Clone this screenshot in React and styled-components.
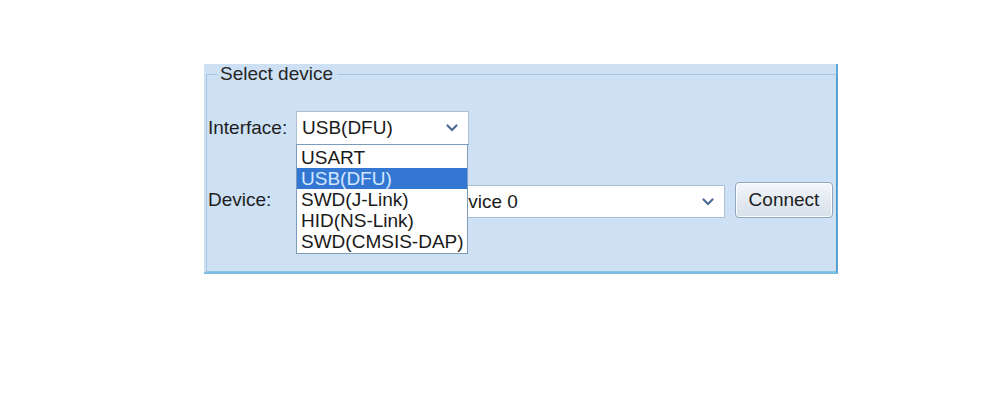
import React from "react";
import styled, { createGlobalStyle } from "styled-components";

const Global = createGlobalStyle`
    html, body {
        margin: 0;
        padding: 0;
        background: #ffffff;
    }
    body {
        font-family: "Liberation Sans", Arial, sans-serif;
        color: #1f1f1f;
    }
`;

const Page = styled.div`
    width: 1000px;
    height: 416px;
    padding: 64px 0 0 204px;
    box-sizing: border-box;
`;

const Panel = styled.div`
    width: 634px;
    height: 210px;
    box-sizing: border-box;
    background: #cde0f4;
    border-right: 2px solid #62a9da;
    border-bottom: 2px solid #7cbde6;
    padding: 0 1px 0 2px;
`;

const Group = styled.fieldset`
    margin: 0;
    height: 100%;
    box-sizing: border-box;
    border: 1px solid #a6c6e2;
    border-right-color: #4f98cc;
    border-bottom-color: #8fc3e6;
    padding: 27px 3px 0 1px;
    display: flex;
    flex-direction: column;
    gap: 37px;
`;

const Legend = styled.legend`
    margin-left: 9px;
    padding: 0 4px 0 3px;
    font-size: 19px;
    line-height: 20px;
    color: #262626;
`;

const Row = styled.div`
    display: flex;
    align-items: ${p => p.$align || "center"};
    height: ${p => p.$h}px;
`;

const Label = styled.div`
    width: 88px;
    align-self: center;
    font-size: 19px;
    color: #1e1e1e;
    flex-shrink: 0;
`;

const Combo = styled.div`
    position: relative;
    width: ${p => p.$w}px;
    height: ${p => p.$h}px;
    box-sizing: border-box;
    background: #ffffff;
    border: 1px solid #adbfd2;
    border-bottom-color: ${p => (p.$open ? "#3c7fb8" : "#adbfd2")};
    display: flex;
    align-items: center;
    justify-content: space-between;
    padding: 0 10px 0 ${p => p.$pad || 5}px;
    font-size: 19px;
    color: #1a1a1a;
`;

const Chevron = () => (
    <svg width="12" height="8" viewBox="0 0 12 8">
        <path d="M1.5 1.5 L6 6 L10.5 1.5" fill="none" stroke="#4d6c98" strokeWidth="2.2" strokeLinecap="round" />
    </svg>
);

const List = styled.ul`
    position: absolute;
    left: -1px;
    top: 100%;
    width: 172px;
    box-sizing: border-box;
    margin: 0;
    padding: 2px 0 1px;
    list-style: none;
    background: #ffffff;
    border: 1px solid #7d9cbd;
    z-index: 5;
`;

const Item = styled.li`
    height: 21px;
    line-height: 21px;
    padding-left: 4px;
    font-size: 19px;
    background: ${p => (p.$active ? "#3377d2" : "transparent")};
    color: ${p => (p.$active ? "#d3e7ff" : "#1a1a1a")};
`;

const Button = styled.button`
    margin-left: 10px;
    width: 98px;
    height: 36px;
    border: 1px solid #8fa7bf;
    border-radius: 4px;
    background: linear-gradient(#f4f7fb, #e3eaf2 50%, #d6e0eb);
    box-shadow: inset 0 0 0 1px #fbfdff;
    font-family: "Liberation Sans", Arial, sans-serif;
    font-size: 19px;
    color: #1e1e1e;
    padding: 0;
`;

const interfaces = ["USART", "USB(DFU)", "SWD(J-Link)", "HID(NS-Link)", "SWD(CMSIS-DAP)"];

export default function App() {
    return (
        <Page>
            <Global />
            <Panel>
                <Group>
                    <Legend>Select device</Legend>
                    <Row $h={34}>
                        <Label>Interface:</Label>
                        <Combo $w={173} $h={34} $open>
                            <span>USB(DFU)</span>
                            <Chevron />
                            <List>
                                {interfaces.map(name => (
                                    <Item key={name} $active={name === "USB(DFU)"}>{name}</Item>
                                ))}
                            </List>
                        </Combo>
                    </Row>
                    <Row $h={36} $align="flex-end">
                        <Label>Device:</Label>
                        <Combo $w={429} $h={33} $pad={147}>
                            <span>Device 0</span>
                            <Chevron />
                        </Combo>
                        <Button>Connect</Button>
                    </Row>
                </Group>
            </Panel>
        </Page>
    );
}
